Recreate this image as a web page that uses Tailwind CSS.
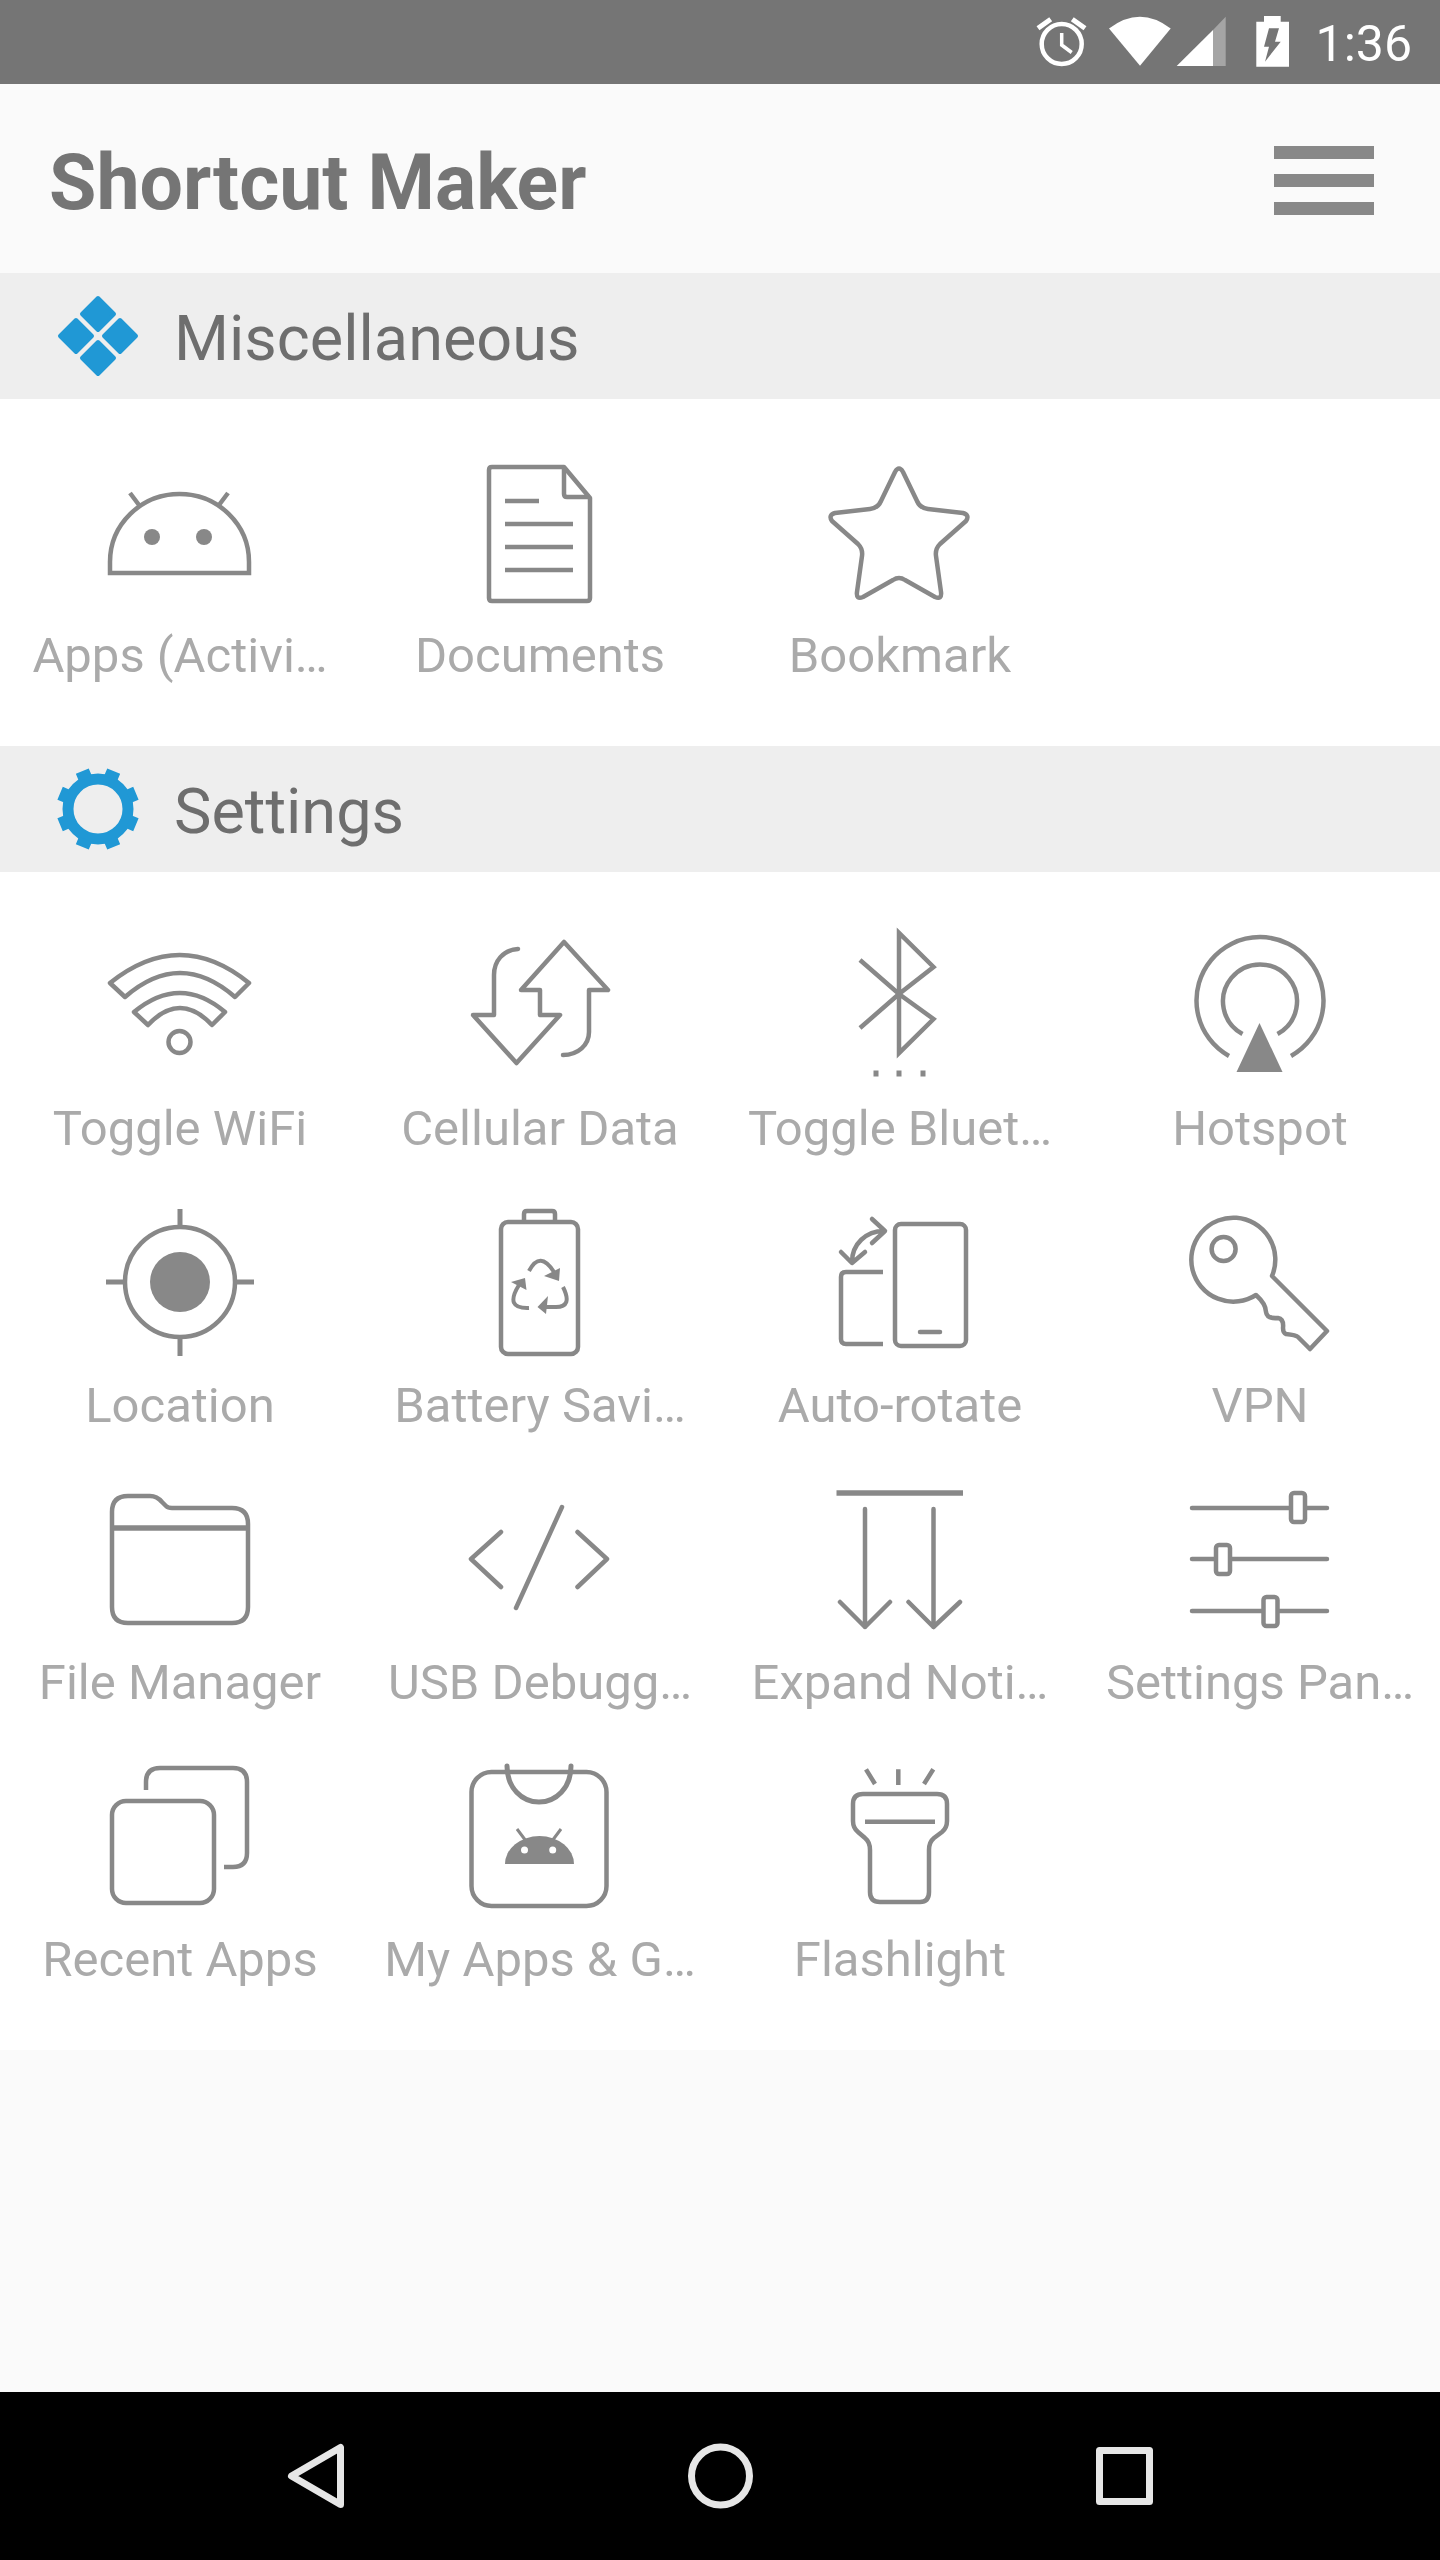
<!DOCTYPE html>
<html lang="en">
<head>
    <meta charset="UTF-8">
    <meta name="viewport" content="width=device-width, initial-scale=1.0">
    <title>Shortcut Maker</title>
    <script src="https://cdn.jsdelivr.net/npm/@tailwindcss/browser@4"></script>
</head>
<body class="bg-[#fafafa] font-['Roboto',sans-serif]">
<div class="flex flex-col w-[1440px] h-[2560px] overflow-hidden">

    <!-- Status bar -->
    <div class="flex items-center justify-end h-[84px] bg-[#757575] shrink-0">
        <svg class="w-[265px] h-[84px]" viewBox="1030 0 265 84" fill="none" stroke="#fff" stroke-width="4.5">
            <circle cx="1062.7" cy="44" r="20"/>
            <path d="M1062.7 33V45L1072.7 52.5" stroke-width="3.5"/>
            <path d="M1039 28.3L1051.7 19.3M1073.3 19.3L1086 28.3" stroke-width="5"/>
            <path d="M1110 28.5Q1141 5 1171.7 28.5L1141 65.7Z" fill="#fff" stroke="none"/>
            <path d="M1177.7 66L1214 30V66Z" fill="#fff" stroke="none"/>
            <path d="M1214 30L1226.7 16.7V66H1214Z" fill="#fff" fill-opacity=".35" stroke="none"/>
            <path d="M1265 16H1281.7V21.7H1290V66.7H1257.3V21.7H1265Z" fill="#fff" stroke="none"/>
            <path d="M1270 28.3H1280L1276 41.7H1281.7L1266 61.7L1270 46.7H1265Z" fill="#757575" stroke="none"/>
        </svg>
        <span class="mt-[3px] text-[50px] text-white ml-[22px] mr-[28px] leading-none">1:36</span>
    </div>

    <!-- App bar -->
    <div class="flex items-center justify-between h-[189px] pl-[49px] pr-[66px] bg-[#fafafa] shrink-0">
        <h1 class="mt-[9px] text-[77px] font-bold text-[#757575] leading-none">Shortcut Maker</h1>
        <div class="flex flex-col gap-[15px] mt-[3px]">
            <div class="w-[100px] h-[13px] bg-[#888]"></div>
            <div class="w-[100px] h-[13px] bg-[#888]"></div>
            <div class="w-[100px] h-[13px] bg-[#888]"></div>
        </div>
    </div>

    <!-- Miscellaneous -->
    <div class="flex items-center h-[126px] pl-[57px] bg-[#eeeeee] shrink-0">
        <svg class="w-[82px] h-[82px]" viewBox="0 0 82 82" fill="#2098d5" stroke="#2098d5" stroke-width="4" stroke-linejoin="round">
            <path d="M41 3L57 19L41 35L25 19Z"/>
            <path d="M19 25L35 41L19 57L3 41Z"/>
            <path d="M63 25L79 41L63 57L47 41Z"/>
            <path d="M41 47L57 63L41 79L25 63Z"/>
        </svg>
        <span class="ml-[35px] mt-[5px] text-[63px] text-[#6e6e6e] leading-none">Miscellaneous</span>
    </div>
    <div class="grid grid-cols-4 py-[35px] bg-white shrink-0">
        <div class="flex flex-col items-center h-[277px] pt-[20px]">
            <svg class="w-[160px] h-[160px]" viewBox="0 0 160 160" fill="none" stroke="#888" stroke-width="4.5">
                <path d="M10 119V108A69.5 68 0 0 1 149 108V119Z"/>
                <path d="M30 39L39 51M128 39L119 51"/>
                <ellipse cx="52" cy="83" rx="8" ry="8" fill="#888" stroke="none"/>
                <ellipse cx="104" cy="83" rx="8" ry="8" fill="#888" stroke="none"/>
            </svg>
            <span class="mt-[5px] text-[49px] text-[#aaaaaa] whitespace-nowrap">Apps (Activi…</span>
        </div>
        <div class="flex flex-col items-center h-[277px] pt-[20px]">
            <svg class="w-[160px] h-[160px]" viewBox="0 0 160 160" fill="none" stroke="#888" stroke-width="4.5" stroke-linejoin="round">
                <path d="M32 13H104L130 44V144Q130 147 127 147H32Q29 147 29 144V16Q29 13 32 13Z"/>
                <path d="M104 13V40Q104 43 107 43H130"/>
                <path d="M45 47H79M45 70H113M45 93H113M45 116H113"/>
            </svg>
            <span class="mt-[5px] text-[49px] text-[#aaaaaa] whitespace-nowrap">Documents</span>
        </div>
        <div class="flex flex-col items-center h-[277px] pt-[20px]">
            <svg class="w-[160px] h-[160px]" viewBox="0 0 160 160" fill="none" stroke="#888" stroke-width="4.5" stroke-linejoin="round">
                <path d="M75 18Q79 11 83 18L97 47Q100 54 108 55L143 59Q150 61 146 67L120 90Q115 95 116 102L121 138Q122 146 115 143L85 126Q79 122 73 126L43 143Q36 146 37 138L42 102Q43 95 38 90L12 67Q8 61 15 59L50 55Q58 54 61 47Z"/>
            </svg>
            <span class="mt-[5px] text-[49px] text-[#aaaaaa] whitespace-nowrap">Bookmark</span>
        </div>
    </div>

    <!-- Settings -->
    <div class="flex items-center h-[126px] pl-[57px] bg-[#eeeeee] shrink-0">
        <svg class="w-[82px] h-[82px]" viewBox="0 0 82 82" fill="none" stroke="#2098d5">
            <circle cx="41" cy="41" r="30" stroke-width="11"/>
            <path d="M71.5 53.6L78.9 56.7M53.6 71.5L56.7 78.9M28.4 71.5L25.3 78.9M10.5 53.6L3.1 56.7M10.5 28.4L3.1 25.3M28.4 10.5L25.3 3.1M53.6 10.5L56.7 3.1M71.5 28.4L78.9 25.3" stroke-width="14"/>
        </svg>
        <span class="ml-[35px] mt-[5px] text-[63px] text-[#6e6e6e] leading-none">Settings</span>
    </div>
    <div class="grid grid-cols-4 py-[35px] bg-white shrink-0">
        <div class="flex flex-col items-center h-[277px] pt-[20px]">
            <svg class="w-[160px] h-[160px]" viewBox="0 0 160 160" fill="none" stroke="#888" stroke-width="4.5" stroke-linejoin="round">
                <path d="M10 56Q80 0 149 56L135 70Q80 22 25 70Z"/>
                <path d="M34 85Q80 47 125 85L112 98Q80 64 48 98Z"/>
                <circle cx="79.5" cy="115" r="11"/>
            </svg>
            <span class="mt-[5px] text-[49px] text-[#aaaaaa] whitespace-nowrap">Toggle WiFi</span>
        </div>
        <div class="flex flex-col items-center h-[277px] pt-[20px]">
            <svg class="w-[160px] h-[160px]" viewBox="0 0 160 160" fill="none" stroke="#888" stroke-width="4.5" stroke-linejoin="round" stroke-linecap="round">
                <path d="M58 22C43 23 34 34 34 48V88H13L56.5 136L100 88H80V63H61L104 15L148 63H129V105C129 118 118 128 103 128"/>
            </svg>
            <span class="mt-[5px] text-[49px] text-[#aaaaaa] whitespace-nowrap">Cellular Data</span>
        </div>
        <div class="flex flex-col items-center h-[277px] pt-[20px]">
            <svg class="w-[160px] h-[160px]" viewBox="0 0 160 160" fill="none" stroke="#888" stroke-width="4.5">
                <path d="M40 33L79 67L113.5 92L79 126V6L113.5 40L79 67L40 101"/>
                <path d="M53.5 143.5h5v6h-5zM76.5 143.5h5v6h-5zM100.5 143.5h5v6h-5z" fill="#888" stroke="none"/>
            </svg>
            <span class="mt-[5px] text-[49px] text-[#aaaaaa] whitespace-nowrap">Toggle Bluet…</span>
        </div>
        <div class="flex flex-col items-center h-[277px] pt-[20px]">
            <svg class="w-[160px] h-[160px]" viewBox="0 0 160 160" fill="none" stroke="#888" stroke-width="4.5">
                <path d="M49 129A63.5 63.5 0 1 1 111 129"/>
                <path d="M62.5 107A37 37 0 1 1 97.5 107"/>
                <path d="M79.5 96L102.5 145H56.5Z" fill="#888" stroke="none"/>
            </svg>
            <span class="mt-[5px] text-[49px] text-[#aaaaaa] whitespace-nowrap">Hotspot</span>
        </div>

        <div class="flex flex-col items-center h-[277px] pt-[20px]">
            <svg class="w-[160px] h-[160px]" viewBox="0 0 160 160" fill="none" stroke="#888" stroke-width="4.5">
                <circle cx="80" cy="78" r="55"/>
                <circle cx="80" cy="78" r="30" fill="#888" stroke="none"/>
                <path d="M80 5V23M80 134V152M6 78H24M136 78H154" stroke-width="5"/>
            </svg>
            <span class="mt-[5px] text-[49px] text-[#aaaaaa] whitespace-nowrap">Location</span>
        </div>
        <div class="flex flex-col items-center h-[277px] pt-[20px]">
            <svg class="w-[160px] h-[160px]" viewBox="0 0 160 160" fill="none" stroke="#888" stroke-width="4.5">
                <rect x="41" y="18" width="77" height="132" rx="7"/>
                <path d="M64 18V10Q64 7 67 7H92Q95 7 95 10V18"/>
                <path d="M69 67Q80 46 94 68M103 83Q113 103 96 103H86M69 104Q44 105 59 81" stroke-width="4"/>
                <path d="M100 64L84 72L99 77ZM77.5 103L88 92L86 110ZM51 78L65 74L66.5 86Z" fill="#888" stroke="none"/>
            </svg>
            <span class="mt-[5px] text-[49px] text-[#aaaaaa] whitespace-nowrap">Battery Savi…</span>
        </div>
        <div class="flex flex-col items-center h-[277px] pt-[20px]">
            <svg class="w-[160px] h-[160px]" viewBox="0 0 160 160" fill="none" stroke="#888" stroke-width="4.5" stroke-linecap="round" stroke-linejoin="round">
                <rect x="75" y="20" width="71" height="122" rx="6"/>
                <path d="M100 128H120"/>
                <path d="M63 68H26Q21 68 21 73V135Q21 140 26 140H63" stroke-linecap="butt"/>
                <path d="M64 27C46 27 32 40 32 58M52 15L65 27L52 39M21 48L32 59L45 48"/>
            </svg>
            <span class="mt-[5px] text-[49px] text-[#aaaaaa] whitespace-nowrap">Auto-rotate</span>
        </div>
        <div class="flex flex-col items-center h-[277px] pt-[20px]">
            <svg class="w-[160px] h-[160px]" viewBox="0 0 160 160" fill="none" stroke="#888" stroke-width="4.5" stroke-linejoin="round">
                <path d="M92 72L147 127L130 145L118 133Q116 131 106 130Q103 129 103 124Q104 115 98 114Q87 115 86 108Q86 100 76 91A42 42 0 1 1 92 72Z"/>
                <circle cx="43.6" cy="45" r="12"/>
            </svg>
            <span class="mt-[5px] text-[49px] text-[#aaaaaa] whitespace-nowrap">VPN</span>
        </div>

        <div class="flex flex-col items-center h-[277px] pt-[20px]">
            <svg class="w-[160px] h-[160px]" viewBox="0 0 160 160" fill="none" stroke="#888" stroke-width="4.5" stroke-linejoin="round">
                <path d="M12 47V31Q12 15 28 15H50Q57 15 62 21L66 25Q68 27 72 27H132Q148 27 148 43V126Q148 142 132 142H28Q12 142 12 126Z"/>
                <path d="M12 47H148" stroke-width="5.5"/>
            </svg>
            <span class="mt-[5px] text-[49px] text-[#aaaaaa] whitespace-nowrap">File Manager</span>
        </div>
        <div class="flex flex-col items-center h-[277px] pt-[20px]">
            <svg class="w-[160px] h-[160px]" viewBox="0 0 160 160" fill="none" stroke="#888" stroke-width="4.5" stroke-linecap="round" stroke-linejoin="round">
                <path d="M41 51L11 78L41 106M117.5 51L147 78L117.5 106M102 26L56 127"/>
            </svg>
            <span class="mt-[5px] text-[49px] text-[#aaaaaa] whitespace-nowrap">USB Debugg…</span>
        </div>
        <div class="flex flex-col items-center h-[277px] pt-[20px]">
            <svg class="w-[160px] h-[160px]" viewBox="0 0 160 160" fill="none" stroke="#888" stroke-width="4.5" stroke-linejoin="round">
                <path d="M16.5 12H143" stroke-width="5.5"/>
                <path d="M45 28V146M20 121L45 146L70 121M113.5 28V146M88.5 121L113.5 146L140 121" stroke-linecap="round"/>
            </svg>
            <span class="mt-[5px] text-[49px] text-[#aaaaaa] whitespace-nowrap">Expand Noti…</span>
        </div>
        <div class="flex flex-col items-center h-[277px] pt-[20px]">
            <svg class="w-[160px] h-[160px]" viewBox="0 0 160 160" fill="none" stroke="#888" stroke-width="4.5" stroke-linecap="round">
                <path d="M12 27H147M12 78H147M12 130H147"/>
                <rect x="111" y="12" width="14" height="29" rx="3" fill="#fff"/>
                <rect x="36" y="64" width="14" height="29" rx="3" fill="#fff"/>
                <rect x="83.5" y="116" width="14" height="29" rx="3" fill="#fff"/>
            </svg>
            <span class="mt-[5px] text-[49px] text-[#aaaaaa] whitespace-nowrap">Settings Pan…</span>
        </div>

        <div class="flex flex-col items-center h-[277px] pt-[20px]">
            <svg class="w-[160px] h-[160px]" viewBox="0 0 160 160" fill="none" stroke="#888" stroke-width="4.5">
                <rect x="12" y="43" width="102" height="102" rx="14"/>
                <path d="M46 32V24Q46 10 60 10H133Q147 10 147 24V95Q147 109 133 109H124"/>
            </svg>
            <span class="mt-[5px] text-[49px] text-[#aaaaaa] whitespace-nowrap">Recent Apps</span>
        </div>
        <div class="flex flex-col items-center h-[277px] pt-[20px]">
            <svg class="w-[160px] h-[160px]" viewBox="0 0 160 160" fill="none" stroke="#888" stroke-width="4.5">
                <rect x="11.5" y="14" width="135" height="134" rx="20"/>
                <path d="M47 8C47 30 62 44 79 44C96 44 111 30 111 8" stroke-width="5" stroke-linecap="round"/>
                <path d="M45 106A34.5 28 0 0 1 114 106Z" fill="#888" stroke="none"/>
                <path d="M57 71L66 83M101 71L92 83" stroke-width="3"/>
                <circle cx="64.5" cy="92" r="3.5" fill="#fff" stroke="none"/>
                <circle cx="92.7" cy="92" r="3.5" fill="#fff" stroke="none"/>
            </svg>
            <span class="mt-[5px] text-[49px] text-[#aaaaaa] whitespace-nowrap">My Apps &amp; G…</span>
        </div>
        <div class="flex flex-col items-center h-[277px] pt-[20px]">
            <svg class="w-[160px] h-[160px]" viewBox="0 0 160 160" fill="none" stroke="#888" stroke-width="4.5" stroke-linejoin="round">
                <path d="M46 11.3L55 26M78.3 11.3V27M113.3 11.3L104 26"/>
                <path d="M43 36H117Q127 36 127 46V63Q127 70 122 74L114 80Q109 84 109 92V134Q109 144 100 144H60Q50 144 50 134V92Q50 84 45 80L38 74Q33 70 33 63V46Q33 36 43 36Z"/>
                <path d="M45 63.7H115"/>
            </svg>
            <span class="mt-[5px] text-[49px] text-[#aaaaaa] whitespace-nowrap">Flashlight</span>
        </div>
    </div>

    <div class="flex-1 bg-[#fafafa]"></div>

    <!-- Navigation bar -->
    <div class="flex items-center h-[168px] pl-[276px] gap-[324px] bg-black shrink-0">
        <svg class="w-[80px] h-[80px]" viewBox="0 0 80 80" fill="none" stroke="#e6e6e6" stroke-width="7" stroke-linejoin="round">
            <path d="M15.5 40L64.5 11.5V68.5Z"/>
        </svg>
        <svg class="w-[80px] h-[80px]" viewBox="0 0 80 80" fill="none" stroke="#e6e6e6" stroke-width="7">
            <circle cx="40.5" cy="40" r="29"/>
        </svg>
        <svg class="w-[80px] h-[80px]" viewBox="0 0 80 80" fill="none" stroke="#e6e6e6" stroke-width="7" stroke-linejoin="round">
            <rect x="15.5" y="14.5" width="50" height="51"/>
        </svg>
    </div>
</div>
</body>
</html>
